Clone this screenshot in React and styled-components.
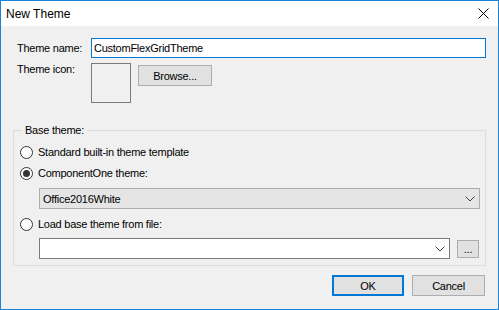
import React from "react";
import styled, { createGlobalStyle } from "styled-components";

const Global = createGlobalStyle`
  html, body { margin: 0; padding: 0; background: #f0f0f0; }
  * { box-sizing: border-box; }
`;

const Window = styled.div`
  width: 499px;
  height: 310px;
  border: 1px solid #1883d7;
  background: #f0f0f0;
  font-family: "Liberation Sans", Arial, sans-serif;
  font-size: 11px;
  letter-spacing: -0.25px;
  color: #000;
  display: flex;
  flex-direction: column;
`;

const TitleBar = styled.div`
  height: 25px;
  background: #fff;
  display: flex;
  align-items: center;
  justify-content: space-between;
  padding: 0 9px 0 5px;
  font-size: 12px;
  letter-spacing: 0;
`;

const Body = styled.div`
  flex: 1;
  padding: 12px 12px 0 12px;
  display: flex;
  flex-direction: column;
`;

const Row = styled.div`
  display: flex;
  align-items: ${(p) => p.$align || "center"};
  padding-left: 4px;
  margin-top: ${(p) => p.$top || 0}px;
`;

const Label = styled.div`
  width: 74px;
  line-height: 13px;
  flex-shrink: 0;
  padding-top: ${(p) => p.$pad || 0}px;
`;

const TextBox = styled.div`
  flex: 1;
  height: 20px;
  background: #fff;
  border: 1px solid ${(p) => (p.$focused ? "#0078d7" : "#7a7a7a")};
  padding: 0 2px;
  display: flex;
  align-items: center;
`;

const IconBox = styled.div`
  width: 40px;
  height: 40px;
  border: 1px solid #7a7a7a;
`;

const Button = styled.div`
  width: ${(p) => p.$w || 74}px;
  height: ${(p) => p.$h || 21}px;
  margin-left: ${(p) => p.$left || 0}px;
  margin-top: ${(p) => p.$top || 0}px;
  background: #e1e1e1;
  border: ${(p) => (p.$default ? "2px solid #0078d7" : "1px solid #adadad")};
  display: flex;
  align-items: center;
  justify-content: center;
  flex-shrink: 0;
`;

const Group = styled.fieldset`
  margin: 21px 0 0 0;
  padding: 0;
  min-width: 0;
  border: 1px solid #dcdcdc;
`;

const Legend = styled.legend`
  margin-left: 8px;
  padding: 0 3px;
  line-height: 13px;
`;

const Options = styled.div`
  padding: 7px 0 6px 6px;
  display: flex;
  flex-direction: column;
`;

const Option = styled.div`
  height: 16px;
  display: flex;
  align-items: center;
  gap: 5px;
  margin-top: ${(p) => p.$top || 0}px;
`;

const Radio = styled.span`
  width: 13px;
  height: 13px;
  border-radius: 50%;
  border: 1px solid #333;
  background: #fff;
  display: flex;
  align-items: center;
  justify-content: center;
  &::after {
    content: "";
    width: 7px;
    height: 7px;
    border-radius: 50%;
    background: ${(p) => (p.$checked ? "#333" : "transparent")};
  }
`;

const ComboRow = styled.div`
  display: flex;
  align-items: center;
  margin: ${(p) => p.$top || 0}px ${(p) => p.$right || 0}px 0 19px;
`;

const Combo = styled.div`
  flex: 1;
  height: 21px;
  border: 1px solid ${(p) => (p.$editable ? "#7a7a7a" : "#adadad")};
  background: ${(p) => (p.$editable ? "#fff" : "#e5e5e5")};
  display: flex;
  align-items: center;
  justify-content: space-between;
  padding: 0 4px 0 3px;
`;

const Footer = styled.div`
  display: flex;
  justify-content: flex-end;
  gap: 8px;
  margin-top: 9px;
  padding-right: 1px;
`;

const Chevron = () => (
  <svg width="10" height="6" viewBox="0 0 10 6">
    <path d="M0.5 0.5 L5 5 L9.5 0.5" fill="none" stroke="#444" strokeWidth="1" />
  </svg>
);

const CloseIcon = () => (
  <svg width="11" height="11" viewBox="0 0 11 11">
    <path d="M0.5 0.5 L10.5 10.5 M10.5 0.5 L0.5 10.5" stroke="#000" strokeWidth="1" />
  </svg>
);

export default function App() {
  return (
    <>
      <Global />
      <Window>
        <TitleBar>
          <span>New Theme</span>
          <CloseIcon />
        </TitleBar>
        <Body>
          <Row>
            <Label>Theme name:</Label>
            <TextBox $focused>CustomFlexGridTheme</TextBox>
          </Row>
          <Row $align="flex-start" $top={5}>
            <Label>Theme icon:</Label>
            <IconBox />
            <Button $left={7} $top={2}>Browse...</Button>
          </Row>
          <Group>
            <Legend>Base theme:</Legend>
            <Options>
              <Option>
                <Radio />
                <span>Standard built-in theme template</span>
              </Option>
              <Option $top={5}>
                <Radio $checked />
                <span>ComponentOne theme:</span>
              </Option>
              <ComboRow $top={7} $right={5}>
                <Combo>
                  <span>Office2016White</span>
                  <Chevron />
                </Combo>
              </ComboRow>
              <Option $top={7}>
                <Radio />
                <span>Load base theme from file:</span>
              </Option>
              <ComboRow $top={6} $right={6}>
                <Combo $editable>
                  <span />
                  <Chevron />
                </Combo>
                <Button $w={22} $h={18} $left={7}>...</Button>
              </ComboRow>
            </Options>
          </Group>
          <Footer>
            <Button $w={72} $default>OK</Button>
            <Button $w={73}>Cancel</Button>
          </Footer>
        </Body>
      </Window>
    </>
  );
}
